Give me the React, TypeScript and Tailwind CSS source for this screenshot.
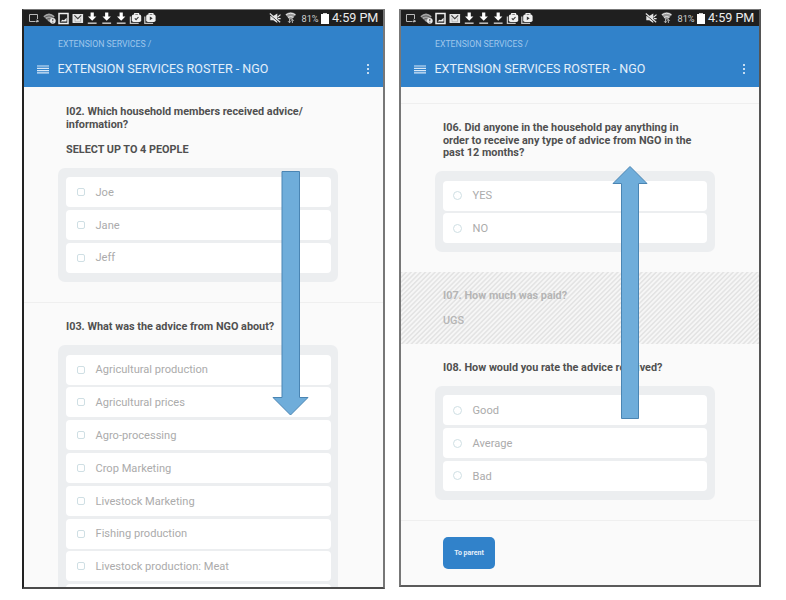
import React from "react";

function StatusIcons() {
  return (
    <svg width="132" height="16" viewBox="24 10 132 16" fill="none" className="shrink-0">
      <path d="M35 21.5H29.5V14.500H37.500V19M35.500 21.500h3" stroke="#b9b9b9" strokeWidth="1" />
      <path d="M36.500 19.200l2.600 1.800-2.600 1.800z" fill="#b9b9b9" />
      <path d="M43.300 16.200Q49 11 54.700 16.200L49.500 22.300z" fill="#a6a6a6" />
      <path d="M44.500 17.600q4.500-3.400 9 0M46.300 19.600q2.700-2 5.400 0" stroke="#3a3a3a" strokeWidth=".7" />
      <circle cx="52.800" cy="20.800" r="2.900" fill="#e8e8e8" />
      <path d="M52.800 19v2M52.800 21.800v.8" stroke="#333" strokeWidth=".9" />
      <rect x="59" y="13.500" width="9" height="10" stroke="#f1f1f1" strokeWidth="1.500" />
      <path d="M60.500 21.500l2-1.800 1.500.6 2.600-2.600v3.800z" fill="#f1f1f1" />
      <rect x="72.500" y="14" width="10.600" height="9" rx=".5" fill="#e6e6e6" />
      <path d="M74.400 15.400L77.800 18.600L81.200 15.400" stroke="#444" strokeWidth="1.200" />
      <path d="M75 18.200v3.600h5.600v-3.600" stroke="#9a9a9a" strokeWidth=".6" />
      {[92.2, 106.7, 121.2].map((x) => (
        <g key={x}>
          <path d={`M${x - 1.6} 12.500h3.200v3.900h2.600L${x} 20.800l-4.200-4.400h2.600z`} fill="#fff" />
          <path d={`M${x - 4.4} 23.200h8.800`} stroke="#c4c4c4" strokeWidth="1.500" />
        </g>
      ))}
      {[131.3, 145.7].map((x, i) => (
        <g key={x} transform={`translate(${x} 0)`}>
          <path d="M-.9 16.500v6.900h8.300" stroke="#c4c4c4" strokeWidth="1.300" />
          <path d="M3.400 15v-1.500h3.800V15" stroke="#eee" strokeWidth="1.200" />
          <rect x=".5" y="14.600" width="9.400" height="7.400" rx="1.800" fill="#f0f0f0" />
          {i === 0 ? (
            <path d="M3.500 18.300l1.300 1.400 2.400-2.700" stroke="#333" strokeWidth="1.100" />
          ) : (
            <path d="M4.100 16.400l2.900 1.900-2.900 1.900z" fill="#333" />
          )}
        </g>
      ))}
    </svg>
  );
}

function SignalIcons() {
  return (
    <svg width="32" height="16" viewBox="268 10 32 16" fill="none" className="shrink-0">
      <path d="M270.300 16h3l4-2.500v9.500l-4-2.800h-3z" fill="#e4e4e4" />
      <path d="M269.800 14.600l10 8.400" stroke="#1f1f1f" strokeWidth="1" />
      <path d="M269.800 13.500l10.400 8.800" stroke="#e4e4e4" strokeWidth="1.200" />
      <path d="M277.500 17.200l3-2.600M278 18.600h2.600" stroke="#e4e4e4" strokeWidth="1.200" />
      <path d="M285.300 14.200Q290.700 10.400 296 14.200L291.800 19.400h-2.400z" fill="#9a9a9a" />
      <path d="M286 14.900q4.700-3.200 9.400 0M288 17.400q2.700-1.800 5.400 0" stroke="#e6e6e6" strokeWidth="1" />
      <path d="M289.500 19v3.800M288.100 21.200l1.400 1.600 1.400-1.600M292.400 23v-3.500M291 20.800l1.400-1.600 1.400 1.600" stroke="#bbb" strokeWidth=".9" />
    </svg>
  );
}

function Header() {
  return (
    <>
      <div className="flex h-[16px] shrink-0 items-center bg-[#1f1f1f] pr-[4px]">
        <StatusIcons />
        <div className="flex-1" />
        <SignalIcons />
        <span className="ml-[1.5px] w-[19.5px] pt-[1px] text-[9.2px] leading-[15px] text-[#d0d0d0]">81%</span>
        <span className="relative mt-[1px] h-[10px] w-[8px] bg-white">
          <span className="absolute -top-[1px] left-[2px] h-[1px] w-[4px] bg-[#cfcfcf]" />
        </span>
        <span className="ml-[3px] w-[47px] whitespace-nowrap text-[12.6px] leading-[16px] text-[#ececec]">4:59 PM</span>
      </div>
      <header className="h-[61px] shrink-0 bg-[#3182ca] pt-[11px]">
        <div className="pl-[34px] text-[8.7px] leading-[14px] text-[#9fc6ea]">EXTENSION SERVICES /</div>
        <div className="mt-[10px] flex h-[16px] items-center pl-[13px]">
          <svg width="12" height="9" viewBox="0 0 12 9" stroke="#d8e8f7" strokeWidth="1.200">
            <path d="M0 1H12M0 3.300H12M0 5.600H12M0 7.900H12" />
          </svg>
          <span className="ml-[8.5px] whitespace-nowrap text-[12.5px] leading-[16px] text-[#e3effa]">EXTENSION SERVICES ROSTER - NGO</span>
          <div className="ml-auto mr-[14px] flex flex-col gap-[2px]">
            <i className="size-[2px] bg-[#c5dcf1]" />
            <i className="size-[2px] bg-[#c5dcf1]" />
            <i className="size-[2px] bg-[#c5dcf1]" />
          </div>
        </div>
      </header>
    </>
  );
}

function Question({ children }: { children: React.ReactNode }) {
  return <h2 className="whitespace-nowrap pl-[42px] text-[10.85px] font-bold leading-[12.5px] text-[#505050]">{children}</h2>;
}

function Options({ items, radio = false, more = false }: { items: string[]; radio?: boolean; more?: boolean }) {
  return (
    <ul className={`flex w-[280px] shrink-0 flex-col gap-[2.8px] rounded-[7px] bg-[#eceef0] pb-[9px] pt-[9.500px] ${radio ? "ml-[33.5px] pl-[8.5px] pr-[8px]" : "ml-[34px] pl-[7.5px] pr-[7.5px]"}`}>
      {items.map((t) => (
        <li key={t} className={`flex h-[30px] shrink-0 items-center rounded-[4px] bg-white ${radio ? "pl-[10px]" : "pl-[11px]"}`}>
          <span className={`border border-[#cfdfe4] ${radio ? "size-[9px] rounded-full" : "size-[8px] rounded-[2px]"}`} />
          <span className={`whitespace-nowrap pt-[1.5px] text-[11.1px] leading-[14px] text-[#ababab] ${radio ? "ml-[10.5px]" : "ml-[11px]"}`}>{t}</span>
        </li>
      ))}
      {more && <li className="h-[30px] shrink-0 rounded-[4px] bg-white" />}
    </ul>
  );
}

export default function App() {
  return (
    <main className="relative flex h-[600px] w-[786px] overflow-hidden bg-white pl-[22px] pt-[9px] font-['Roboto',sans-serif]">
      <section className="flex h-[580px] w-[363px] shrink-0 flex-col overflow-hidden border-x-2 border-b-2 border-t border-b-[#4b4b4b] border-l-[#222] border-r-[#777] border-t-[#777] bg-[#fafafa]">
        <Header />
        <div className="h-[19px] shrink-0" />
        <Question>
          I02. Which household members received advice/
          <br />
          information?
          <br />
          <br />
          SELECT UP TO 4 PEOPLE
        </Question>
        <div className="h-[11.500px] shrink-0" />
        <Options items={["Joe", "Jane", "Jeff"]} />
        <div className="mt-[20.500px] h-px shrink-0 bg-[#efefef]" />
        <div className="h-[17.500px] shrink-0" />
        <Question>I03. What was the advice from NGO about?</Question>
        <div className="h-[12px] shrink-0" />
        <Options
          more
          items={["Agricultural production", "Agricultural prices", "Agro-processing", "Crop Marketing", "Livestock Marketing", "Fishing production", "Livestock production: Meat"]}
        />
      </section>

      <section className="ml-[14px] flex h-[578px] w-[362px] shrink-0 flex-col overflow-hidden border-x-2 border-b-2 border-t border-b-[#5b5b5b] border-l-[#777] border-r-[#555] border-t-[#777] bg-[#fafafa]">
        <Header />
        <div className="mt-[16px] h-px shrink-0 bg-[#efefef]" />
        <div className="h-[18px] shrink-0" />
        <Question>
          I06. Did anyone in the household pay anything in
          <br />
          order to receive any type of advice from NGO in the
          <br />
          past 12 months?
        </Question>
        <div className="h-[11.500px] shrink-0" />
        <Options radio items={["YES", "NO"]} />
        <div className="mt-[20px] flex h-[72px] shrink-0 flex-col bg-[repeating-linear-gradient(135deg,#e4e4e4_0px,#e4e4e4_0.8px,#f6f6f6_1.6px,#f6f6f6_2.6px,#e4e4e4_3.4px)] pl-[42px] pt-[18px] text-[10.85px] leading-[12.5px] text-[#b5b5b5]">
          <p className="font-bold">I07. How much was paid?</p>
          <p className="mt-[12.5px] font-medium">UGS</p>
        </div>
        <div className="h-[17.500px] shrink-0" />
        <Question>I08. How would you rate the advice received?</Question>
        <div className="h-[11.500px] shrink-0" />
        <Options radio items={["Good", "Average", "Bad"]} />
        <div className="mt-[20.500px] h-px shrink-0 bg-[#efefef]" />
        <button className="ml-[42px] mt-[16px] h-[32px] w-[52px] shrink-0 rounded-[5px] bg-[#3182ca] text-[7px] font-bold text-[#e6f0fa]">To parent</button>
      </section>

      <svg className="absolute left-0 top-0" width="786" height="600" fill="#6fadda" stroke="#4a85b3" strokeWidth="1">
        <path d="M282 171.500H299.500V397.500H308L290.500 415L273 397.500H282Z" />
        <path d="M630 166.500L647 183.500H638.500V418.500H621.500V183.500H613Z" />
      </svg>
    </main>
  );
}
